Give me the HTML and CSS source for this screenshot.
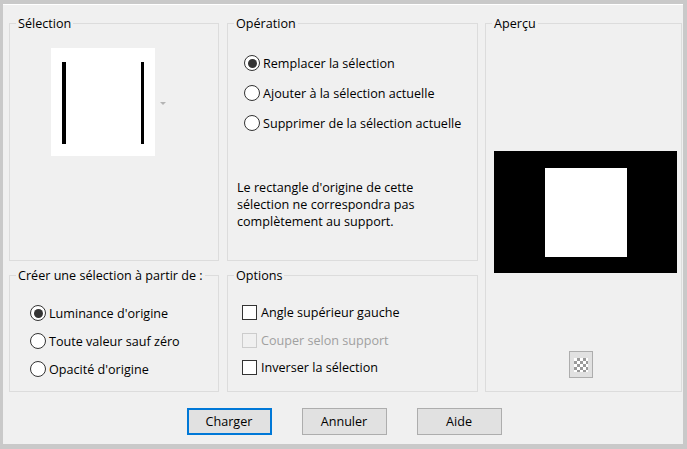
FILE: index.html
```html
<!DOCTYPE html>
<html lang="fr">
<head>
    <meta charset="UTF-8">
    <meta name="viewport" content="width=device-width, initial-scale=1.0">
    <title>Sélection</title>
    <link rel="stylesheet" href="styles.css">
</head>
<body>

    <div class="dialogue">
        <div class="grille">

            <fieldset class="groupe selection">
                <legend>Sélection</legend>
                <div class="corps choix-source">
                    <div class="vignette">
                        <span class="trait gauche"></span>
                        <span class="trait droite"></span>
                    </div>
                    <span class="fleche"></span>
                </div>
            </fieldset>

            <fieldset class="groupe operation">
                <legend>Opération</legend>
                <div class="corps">
                    <label class="ligne"><input type="radio" name="op" checked> Remplacer la sélection</label>
                    <label class="ligne"><input type="radio" name="op"> Ajouter à la sélection actuelle</label>
                    <label class="ligne"><input type="radio" name="op"> Supprimer de la sélection actuelle</label>
                    <p class="avertissement">Le rectangle d'origine de cette sélection ne correspondra pas complètement au support.</p>
                </div>
            </fieldset>

            <fieldset class="groupe apercu">
                <legend>Aperçu</legend>
                <div class="corps">
                    <div class="ecran"><div class="zone"></div></div>
                    <button class="damier" title="Transparence"><span></span></button>
                </div>
            </fieldset>

            <fieldset class="groupe creer">
                <legend>Créer une sélection à partir de :</legend>
                <div class="corps">
                    <label class="ligne"><input type="radio" name="src" checked> Luminance d'origine</label>
                    <label class="ligne"><input type="radio" name="src"> Toute valeur sauf zéro</label>
                    <label class="ligne"><input type="radio" name="src"> Opacité d'origine</label>
                </div>
            </fieldset>

            <fieldset class="groupe options">
                <legend>Options</legend>
                <div class="corps">
                    <label class="ligne"><input type="checkbox"> Angle supérieur gauche</label>
                    <label class="ligne inactif"><input type="checkbox" disabled> Couper selon support</label>
                    <label class="ligne"><input type="checkbox"> Inverser la sélection</label>
                </div>
            </fieldset>

        </div>

        <div class="boutons">
            <button class="bouton defaut">Charger</button>
            <button class="bouton">Annuler</button>
            <button class="bouton">Aide</button>
        </div>
    </div>

</body>
</html>
```

FILE: styles.css
```css
*{
    box-sizing: border-box;
}

body{
    margin: 0;
    padding: 4px 4px 5px 3px;
    background-color: #c9c9c9;
    font-family: "Open Sans", "Noto Sans", sans-serif;
    font-size: 12.6px;
    color: #000;
}

.dialogue{
    height: 440px;
    background-color: #f0f0f0;
    border-top: 1px solid #fff;
    padding: 11px 2px 0 6px;
}

.grille{
    display: grid;
    grid-template-columns: 210px 251px 196px;
    grid-template-rows: 245px 124px;
    column-gap: 8px;
    row-gap: 7px;
}

.groupe{
    border: 1px solid #dcdcdc;
    margin: 0;
    padding: 0;
    min-width: 0;
}

.groupe legend{
    margin-left: 6px;
    padding: 0 2px;
    line-height: 15px;
}

.selection{
    grid-column: 1;
    grid-row: 1;
}
.operation{
    grid-column: 2;
    grid-row: 1;
}
.apercu{
    grid-column: 3;
    grid-row: 1 / 3;
    margin-left: -1px;
}
.creer{
    grid-column: 1;
    grid-row: 2;
}
.options{
    grid-column: 2;
    grid-row: 2;
}

/* Sélection */
.choix-source{
    display: flex;
    align-items: center;
    padding: 17px 0 0 41px;
}

.vignette{
    width: 104px;
    height: 108px;
    background-color: #fff;
    display: flex;
    justify-content: space-between;
    padding: 14px 11px 0 11px;
}

.trait{
    height: 82px;
    background-color: #000;
}
.trait.gauche{
    width: 4px;
}
.trait.droite{
    width: 3px;
}

.fleche{
    margin-left: 5px;
    margin-top: 2px;
    border-left: 3px solid transparent;
    border-right: 3px solid transparent;
    border-top: 3px solid #b4b4b4;
}

/* Lignes de choix */
.ligne{
    display: flex;
    align-items: center;
    height: 30px;
    white-space: nowrap;
}

.operation .corps{
    padding: 17px 0 0 16px;
}

.creer .corps{
    padding: 16px 0 0 20px;
}
.creer .ligne{
    height: 28px;
}

.options .corps{
    padding: 16px 0 0 14px;
}
.options .ligne{
    height: 27.5px;
}

input[type="radio"]{
    appearance: none;
    flex-shrink: 0;
    margin: 0 3px 0 0;
    width: 16px;
    height: 16px;
    border: 1px solid #333;
    border-radius: 50%;
    background-color: #fff;
    display: grid;
    place-content: center;
}
input[type="radio"]:checked::before{
    content: "";
    width: 9px;
    height: 9px;
    border-radius: 50%;
    background-color: #333;
}

input[type="checkbox"]{
    appearance: none;
    flex-shrink: 0;
    margin: 0 4px 0 0;
    width: 15px;
    height: 15px;
    border: 1px solid #333;
    background-color: #fff;
}
input[type="checkbox"]:disabled{
    border-color: #cccccc;
    background-color: #f0f0f0;
}
.inactif{
    color: #a0a0a0;
}

.avertissement{
    margin: 41px 0 0 -7px;
    line-height: 17px;
    width: 200px;
}

/* Aperçu */
.apercu .corps{
    display: flex;
    flex-direction: column;
    align-items: center;
}

.ecran{
    margin: 120px 0 0 3px;
    width: 183px;
    height: 122px;
    background-color: #000;
    padding: 17px 0 0 51px;
}

.zone{
    width: 82px;
    height: 89px;
    background-color: #fff;
}

.damier{
    margin: 78px 6px 0 0;
    width: 24px;
    height: 27px;
    padding: 0;
    border: 1px solid #adadad;
    background-color: #e1e1e1;
    display: grid;
    place-content: center;
}
.damier span{
    width: 14px;
    height: 14px;
    background-color: #fff;
    background-image:
        linear-gradient(45deg, #9a9a9a 25%, transparent 25%, transparent 75%, #9a9a9a 75%),
        linear-gradient(45deg, #9a9a9a 25%, transparent 25%, transparent 75%, #9a9a9a 75%);
    background-size: 6px 6px;
    background-position: 0 0, 3px 3px;
}

/* Boutons */
.boutons{
    display: flex;
    justify-content: center;
    gap: 30px;
    margin-top: 16px;
    padding-right: 2px;
}

.bouton{
    width: 85px;
    height: 27px;
    font-family: inherit;
    font-size: 12.6px;
    color: #000;
    background-color: #e1e1e1;
    border: 1px solid #adadad;
    padding: 0;
}

.bouton.defaut{
    border: 2px solid #0078d7;
}
```
